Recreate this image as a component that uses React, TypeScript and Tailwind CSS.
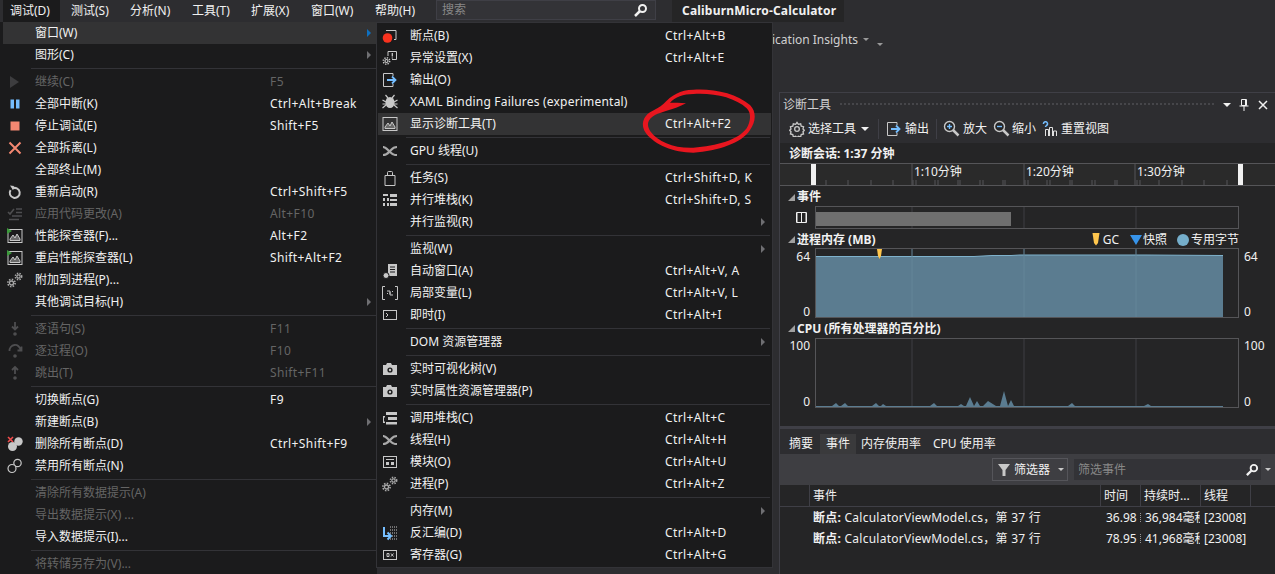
import type {ReactNode} from 'react';

const gray = '#c8c8c8';
const dim = '#4e4e50';

function Gears({c = '#a9a9a9'}: {c?: string}) {
	return (
		<svg width="16" height="16" viewBox="0 0 16 16" fill="none" stroke={c}>
			<circle cx="4.5" cy="11" r="2" strokeWidth="1.3" />
			<circle cx="4.5" cy="11" r="3.6" strokeWidth="1.6" strokeDasharray="1.5 1.3" />
			<circle cx="11.5" cy="4.5" r="1.7" strokeWidth="1.2" />
			<circle cx="11.5" cy="4.5" r="3.2" strokeWidth="1.5" strokeDasharray="1.4 1.2" />
		</svg>
	);
}

function Chart({play}: {play?: boolean}) {
	return (
		<svg width="16" height="16" viewBox="0 0 16 16" fill="none">
			<rect x="1" y="1.5" width="14" height="13" stroke={gray} />
			<path d="M3 12.500V11l3-4 2 3 2-4 3 5v1.500z" stroke={gray} fill="#6a6a6a" />
			{play ? <path d="M0 0l5 3-5 3z" fill="#3c9a3c" /> : null}
		</svg>
	);
}

function Threads() {
	return (
		<svg width="16" height="16" viewBox="0 0 16 16" fill="none" stroke="#a9a9a9" strokeWidth="2.200">
			<path d="M1 4c2 0 3 1 5 3l2 2c2 2 3 3 5 3M15 4c-2 0-4 .500-6 3L7 9c-2 2.500-3 3-6 3" />
			<path d="M13 12h2M1 4h1" />
		</svg>
	);
}

function Camera() {
	return (
		<svg width="16" height="16" viewBox="0 0 16 16">
			<path d="M1 4h3l1-2h4l1 2h5v10H1z" fill={gray} />
			<circle cx="8" cy="9" r="2.6" fill="#1b1b1c" />
			<circle cx="8" cy="9" r="1.2" fill={gray} />
		</svg>
	);
}

function StepIcon({d, c = dim}: {d: string; c?: string}) {
	return (
		<svg width="16" height="16" viewBox="0 0 16 16" fill="none" stroke={c} strokeWidth="1.8">
			<path d={d} />
			<circle cx="8" cy="13" r="1.8" fill={c} stroke="none" />
		</svg>
	);
}

const icons: Record<string, ReactNode> = {
	play: (
		<svg width="16" height="16" viewBox="0 0 16 16">
			<path d="M3 2l9 6-9 6z" fill="#3d3d3f" />
		</svg>
	),
	pause: (
		<svg width="16" height="16" viewBox="0 0 16 16">
			<path d="M3.500 3.500h3.500v9H3.500zM9 3.500h3.500v9H9z" fill="#75beff" />
		</svg>
	),
	stop: (
		<svg width="16" height="16" viewBox="0 0 16 16">
			<rect x="3.500" y="3.500" width="9" height="9" fill="#f48771" />
		</svg>
	),
	x: (
		<svg width="16" height="16" viewBox="0 0 16 16" stroke="#f48771" strokeWidth="2">
			<path d="M2.500 2.500l11 11M13.500 2.500l-11 11" />
		</svg>
	),
	restart: (
		<svg width="16" height="16" viewBox="0 0 16 16" fill="none" stroke={gray} strokeWidth="2">
			<path d="M5.200 4.600a5 5 0 1 1-1.600 1.500" />
			<path d="M3 1.500l4 .5-1 4z" fill={gray} stroke="none" />
		</svg>
	),
	apply: (
		<svg width="16" height="16" viewBox="0 0 16 16" fill="none" stroke={dim} strokeWidth="1.600">
			<path d="M1 6l2 2 4-5M9 3h6M9 6.500h6M5 10h10M2 13.500h10" />
		</svg>
	),
	perf: <Chart play />,
	gears: <Gears />,
	stepin: <StepIcon d="M8 1v7M5 5.500l3 3 3-3" />,
	stepover: <StepIcon d="M2.500 8a5.500 5.500 0 0 1 11-1M14.500 3.500v4h-4" />,
	stepout: <StepIcon d="M8 9V2.500M5 5l3-3 3 3" />,
	delbp: (
		<svg width="16" height="16" viewBox="0 0 16 16">
			<circle cx="11.500" cy="5.500" r="4.200" fill={gray} />
			<circle cx="5.500" cy="10.500" r="4.500" fill={gray} />
			<path d="M1 1l5 5M6 1L1 6" stroke="#f14c4c" strokeWidth="1.600" />
		</svg>
	),
	disbp: (
		<svg width="16" height="16" viewBox="0 0 16 16" fill="none" stroke={gray} strokeWidth="1.200">
			<circle cx="10.500" cy="5" r="3.700" />
			<circle cx="5" cy="10.500" r="4" fill="#1b1b1c" />
		</svg>
	),
	bp: (
		<svg width="16" height="16" viewBox="0 0 16 16" fill="none">
			<path d="M4 2.500h10v9h-2" stroke={gray} />
			<circle cx="5.500" cy="10" r="4.800" fill="#f8321e" />
		</svg>
	),
	exc: (
		<svg width="16" height="16" viewBox="0 0 16 16" fill="none">
			<path d="M6 6V1.500h8.500v8H10" stroke={gray} />
			<path d="M10.300 3v3.500M10.300 7.500v1" stroke={gray} strokeWidth="1.300" />
			<circle cx="4.500" cy="11" r="1.500" stroke={gray} strokeWidth="1.200" />
			<circle cx="4.500" cy="11" r="3.200" stroke={gray} strokeWidth="1.500" strokeDasharray="1.300 1.200" />
		</svg>
	),
	output: (
		<svg width="16" height="16" viewBox="0 0 16 16" fill="none">
			<path d="M11 4V1.500H1.500v13H11V12" stroke={gray} />
			<path d="M5 8h8M10 4.500L13.500 8 10 11.500" stroke="#75beff" strokeWidth="1.800" />
		</svg>
	),
	bug: (
		<svg width="16" height="16" viewBox="0 0 16 16" fill="none" stroke={gray} strokeWidth="1.200">
			<ellipse cx="8" cy="8.500" rx="4.500" ry="5.500" fill={gray} stroke="none" />
			<path d="M3.500 1l2.500 3M12.500 1L10 4M.500 6l3.500 2M15.500 6L12 8M.500 14l3.500-3M15.500 14L12 11M.500 10H4M15.500 10H12" />
		</svg>
	),
	diag: <Chart />,
	threads: <Threads />,
	task: (
		<svg width="16" height="16" viewBox="0 0 16 16" fill="none" stroke={gray}>
			<path d="M3 5.500h10v10H3zM5.500 5.500V2.500a1 1 0 0 1 1-1h3a1 1 0 0 1 1 1v3" />
		</svg>
	),
	stacks: (
		<svg width="16" height="16" viewBox="0 0 16 16" fill={gray}>
			<path d="M1 2h5v2H1zM8 2h7v3H8zM1 6h2v3H1zM5 6h2v3H5zM8 7h7v2H8zM1 11h2v3H1zM5 11h2v3H5zM8 11h7v3H8z" />
		</svg>
	),
	autos: (
		<svg width="16" height="16" viewBox="0 0 16 16">
			<path d="M6 1h9v12H6z" fill={gray} />
			<path d="M8 4h5M8 6.500h5M8 9h5" stroke="#1b1b1c" />
			<circle cx="4" cy="12.500" r="3" fill={gray} stroke="#1b1b1c" />
		</svg>
	),
	locals: (
		<svg width="16" height="16" viewBox="0 0 16 16" fill="none" stroke={gray}>
			<path d="M3 1.500H.5v13H3M13 1.500h2.500v13H13" />
			<path d="M5 6h3v3M11 10H8V7M5 9l1-1M11 6l-1 1" />
		</svg>
	),
	immediate: (
		<svg width="16" height="16" viewBox="0 0 16 16" fill="none" stroke={gray}>
			<rect x="1.500" y="3.500" width="13" height="9" />
			<path d="M4 6l2 2-2 2" />
		</svg>
	),
	camera: <Camera />,
	callstack: (
		<svg width="16" height="16" viewBox="0 0 16 16" fill={gray}>
			<path d="M4 2h11v3H4zM6 7h9v3H6zM4 12h11v2.500H4zM1 6h2v1.500H2v4h1V13H1z" />
		</svg>
	),
	modules: (
		<svg width="16" height="16" viewBox="0 0 16 16" fill="none" stroke={gray}>
			<rect x="1.500" y="2.500" width="13" height="11" />
			<path d="M4 5.500h8" strokeWidth="1" />
			<path d="M4 8h3v3H4zM9 8h3v3H9z" fill={gray} stroke="none" />
		</svg>
	),
	disasm: (
		<svg width="16" height="16" viewBox="0 0 16 16" fill="none">
			<path d="M8 2h7M8 5h7M8 8h7M8 11h7M8 14h7" stroke={gray} strokeDasharray="1 1" />
			<path d="M2 2v9h6M5.500 7.500L9 11l-3.500 3.500" stroke="#75beff" strokeWidth="2" />
		</svg>
	),
	registers: (
		<svg width="16" height="16" viewBox="0 0 16 16" fill="none" stroke={gray}>
			<rect x="1.500" y="3.500" width="13" height="9" />
			<path d="M5 6.500h2v3H5zM9 6.500l2.500 3M11.500 6.500L9 9.500" />
		</svg>
	),
};

type Item = {l: string; k?: string; i?: string; off?: boolean; sub?: boolean; hot?: boolean} | 'sep';

const leftMenu: Item[] = [
	{l: '窗口(W)', sub: true, hot: true},
	{l: '图形(C)', sub: true},
	'sep',
	{l: '继续(C)', k: 'F5', i: 'play', off: true},
	{l: '全部中断(K)', k: 'Ctrl+Alt+Break', i: 'pause'},
	{l: '停止调试(E)', k: 'Shift+F5', i: 'stop'},
	{l: '全部拆离(L)', i: 'x'},
	{l: '全部终止(M)'},
	{l: '重新启动(R)', k: 'Ctrl+Shift+F5', i: 'restart'},
	{l: '应用代码更改(A)', k: 'Alt+F10', i: 'apply', off: true},
	{l: '性能探查器(F)...', k: 'Alt+F2', i: 'perf'},
	{l: '重启性能探查器(L)', k: 'Shift+Alt+F2', i: 'perf'},
	{l: '附加到进程(P)...', i: 'gears'},
	{l: '其他调试目标(H)', sub: true},
	'sep',
	{l: '逐语句(S)', k: 'F11', i: 'stepin', off: true},
	{l: '逐过程(O)', k: 'F10', i: 'stepover', off: true},
	{l: '跳出(T)', k: 'Shift+F11', i: 'stepout', off: true},
	'sep',
	{l: '切换断点(G)', k: 'F9'},
	{l: '新建断点(B)', sub: true},
	{l: '删除所有断点(D)', k: 'Ctrl+Shift+F9', i: 'delbp'},
	{l: '禁用所有断点(N)', i: 'disbp'},
	'sep',
	{l: '清除所有数据提示(A)', off: true},
	{l: '导出数据提示(X) ...', off: true},
	{l: '导入数据提示(I)...'},
	'sep',
	{l: '将转储另存为(V)...', off: true},
];

const windowMenu: Item[] = [
	{l: '断点(B)', k: 'Ctrl+Alt+B', i: 'bp'},
	{l: '异常设置(X)', k: 'Ctrl+Alt+E', i: 'exc'},
	{l: '输出(O)', i: 'output'},
	{l: 'XAML Binding Failures (experimental)', i: 'bug'},
	{l: '显示诊断工具(T)', k: 'Ctrl+Alt+F2', i: 'diag', hot: true},
	'sep',
	{l: 'GPU 线程(U)', i: 'threads'},
	'sep',
	{l: '任务(S)', k: 'Ctrl+Shift+D, K', i: 'task'},
	{l: '并行堆栈(K)', k: 'Ctrl+Shift+D, S', i: 'stacks'},
	{l: '并行监视(R)', sub: true},
	'sep',
	{l: '监视(W)', sub: true},
	{l: '自动窗口(A)', k: 'Ctrl+Alt+V, A', i: 'autos'},
	{l: '局部变量(L)', k: 'Ctrl+Alt+V, L', i: 'locals'},
	{l: '即时(I)', k: 'Ctrl+Alt+I', i: 'immediate'},
	'sep',
	{l: 'DOM 资源管理器', sub: true},
	'sep',
	{l: '实时可视化树(V)', i: 'camera'},
	{l: '实时属性资源管理器(P)', i: 'camera'},
	'sep',
	{l: '调用堆栈(C)', k: 'Ctrl+Alt+C', i: 'callstack'},
	{l: '线程(H)', k: 'Ctrl+Alt+H', i: 'threads'},
	{l: '模块(O)', k: 'Ctrl+Alt+U', i: 'modules'},
	{l: '进程(P)', k: 'Ctrl+Alt+Z', i: 'gears'},
	'sep',
	{l: '内存(M)', sub: true},
	{l: '反汇编(D)', k: 'Ctrl+Alt+D', i: 'disasm'},
	{l: '寄存器(G)', k: 'Ctrl+Alt+G', i: 'registers'},
];

function MenuRows({items, labelWidth}: {items: Item[]; labelWidth: string}) {
	return (
		<>
			{items.map((it, n) =>
				it === 'sep' ? (
					<div key={n} className="flex h-[5px] items-center pl-[28px] pr-[1px]">
						<div className="h-px w-full bg-[#333337]" />
					</div>
				) : (
					<div
						key={n}
						className={`flex h-[22px] items-center ${it.hot ? 'bg-[#333334]' : ''} ${it.off ? 'text-[#656565]' : 'text-[#f1f1f1]'}`}
					>
						<span className="flex w-[24px] shrink-0 justify-center">{it.i ? icons[it.i] : null}</span>
						<span className={`ml-[8px] shrink-0 whitespace-nowrap ${labelWidth} ${it.l.startsWith('XAML') ? 'tracking-[0.2px]' : ''}`}>
							{it.l}
						</span>
						<span className="flex-1 whitespace-nowrap tracking-[0.4px]">{it.k}</span>
						{it.sub ? (
							<span
								className={`mr-[6px] h-0 w-0 border-y-[4px] border-l-[4px] border-y-transparent ${it.hot ? 'border-l-[#0e70c0]' : 'border-l-[#6f6f72]'}`}
							/>
						) : null}
					</div>
				),
			)}
		</>
	);
}

function Section({children, right, className}: {children: ReactNode; right?: ReactNode; className: string}) {
	return (
		<div className={`flex items-center pl-[8px] ${className}`}>
			<span className="mr-[2px] h-0 w-0 border-b-[7px] border-l-[7px] border-b-[#a0a0a0] border-l-transparent" />
			<span className="font-bold text-[#f1f1f1]">{children}</span>
			{right}
		</div>
	);
}

function PlotRow({top, bottom, pad, children}: {top: string; bottom: string; pad: string; children: ReactNode}) {
	return (
		<div className="flex h-[70px]">
			<div className={`flex w-[35px] flex-col items-end justify-between pr-[5px] leading-[12px] text-[#f1f1f1] ${pad}`}>
				<span>{top}</span>
				<span>{bottom}</span>
			</div>
			<div className="w-[424px] border border-[#555558]">{children}</div>
			<div className={`flex flex-col justify-between pl-[5px] leading-[12px] text-[#f1f1f1] ${pad}`}>
				<span>{top}</span>
				<span>{bottom}</span>
			</div>
		</div>
	);
}

function Grid({c = '#3e3e42'}: {c?: string}) {
	return <path d="M96 0v70M208 0v70M320 0v70" stroke={c} />;
}

function Magnifier({plus}: {plus?: boolean}) {
	return (
		<svg width="17" height="17" viewBox="0 0 17 17" fill="none">
			<path d="M10 10l5.500 5.500" stroke={gray} strokeWidth="2.500" />
			<circle cx="6.500" cy="6.500" r="5" stroke={gray} strokeWidth="1.400" fill="#252526" />
			<path d={plus ? 'M4 6.500h5M6.500 4v5' : 'M4 6.500h5'} stroke="#75beff" strokeWidth="1.400" />
		</svg>
	);
}

const ticks = [0, 22, 45, 67, 90, 112, 134, 157, 179, 202, 224, 246, 269, 291, 314];

export default function App() {
	return (
		<div className="relative h-[574px] w-[1275px] overflow-hidden bg-[#2d2d30] text-[12px] [font-family:'Noto_Sans','Noto_Sans_CJK_SC',sans-serif]">
			<div className="flex h-[22px] items-center text-[#f1f1f1]">
				<div className="ml-[3px] flex h-[22px] w-[57px] items-center bg-[#1b1b1c] pl-[7px]">调试(D)</div>
				<span className="ml-[11px] w-[59px]">测试(S)</span>
				<span className="w-[62px]">分析(N)</span>
				<span className="w-[59px]">工具(T)</span>
				<span className="w-[60px]">扩展(X)</span>
				<span className="w-[64px]">窗口(W)</span>
				<span className="w-[61px]">帮助(H)</span>
				<div className="flex h-[20px] w-[220px] items-center justify-between self-start border border-[#3f3f46] bg-[#333337] pl-[5px] pr-[7px] text-[#888888]">
					搜索
					<svg width="15" height="15" viewBox="0 0 15 15" fill="none" stroke="#f1f1f1">
						<circle cx="9.500" cy="5.500" r="3.500" strokeWidth="2" />
						<path d="M7 8l-5 5" strokeWidth="2.500" />
					</svg>
				</div>
				<div className="ml-[16px] flex h-[22px] w-[172px] items-center bg-[#252526] pl-[10px] font-bold tracking-[0.2px]">
					CaliburnMicro-Calculator
				</div>
			</div>

			<div className="flex h-[70px] items-start justify-end pr-[392px] pt-[9px] text-[#d0d0d0]">
				<span>Application Insights</span>
				<span className="ml-[5px] mt-[7px] h-0 w-0 border-x-[3px] border-t-[3px] border-x-transparent border-t-[#999999]" />
				<span className="ml-[8px] mt-[12px] h-0 w-0 border-x-[3px] border-t-[3px] border-x-transparent border-t-[#999999]" />
			</div>

			{/* diagnostic tools panel */}
			<div className="ml-auto h-[482px] w-[496px] border-l border-t border-[#3f3f46] bg-[#252526]">
				<div className="flex h-[23px] items-center bg-[#2d2d30] pl-[3px] pr-[6px] text-[#d0d0d0]">
					<span>诊断工具</span>
					<div className="mx-[8px] h-[5px] flex-1 bg-[radial-gradient(#46464a_1px,transparent_1px)] bg-[length:4px_4px]" />
					<span className="mr-[7px] h-0 w-0 border-x-[4px] border-t-[4px] border-x-transparent border-t-[#f1f1f1]" />
					<svg className="mr-[7px]" width="12" height="14" viewBox="0 0 12 14" fill="none" stroke="#f1f1f1">
						<path d="M3.500 1.500h5v6h-5zM1.500 8h9M6 8v5M7.500 2v5" />
					</svg>
					<svg width="12" height="12" viewBox="0 0 12 12" stroke="#f1f1f1" strokeWidth="1.500">
						<path d="M2 2l8 8M10 2l-8 8" />
					</svg>
				</div>
				<div className="flex h-[27px] items-center bg-[#2d2d30] pb-[2px] pl-[9px] text-[#f1f1f1]">
					<svg width="16" height="16" viewBox="0 0 24 24" fill="none" stroke={gray} strokeWidth="2">
						<circle cx="12" cy="12" r="3.500" />
						<path d="M12 2l2 3 3.500-.8.800 3.500 3.500.8-.8 3.500 2 2-2 2 .8 3.500-3.500.8-.8 3.500-3.500-.8-2 2-2-2-3.500.8-.8-3.500-3.500-.8.800-3.500-2-2 2-2-.8-3.500 3.500-.8.800-3.500 3.500.8z" />
					</svg>
					<span className="ml-[3px]">选择工具</span>
					<span className="ml-[5px] h-0 w-0 border-x-[4px] border-t-[4px] border-x-transparent border-t-[#f1f1f1]" />
					<div className="ml-[9px] h-[20px] w-px bg-[#3f3f46]" />
					<span className="ml-[7px] flex">{icons.output}</span>
					<span className="ml-[3px]">输出</span>
					<div className="ml-[7px] h-[20px] w-px bg-[#3f3f46]" />
					<span className="ml-[6px] flex">
						<Magnifier plus />
					</span>
					<span className="ml-[3px]">放大</span>
					<span className="ml-[6px] flex">
						<Magnifier />
					</span>
					<span className="ml-[2px]">缩小</span>
					<svg className="ml-[6px]" width="16" height="16" viewBox="0 0 16 16" fill="none" stroke="#e0e0e0">
						<path d="M3.500 15V8.500h3V15M7.500 15V6.500h3V15M11.500 15v-5h3v5" />
						<path d="M1.500 3a2 2 0 1 1 3 1.500c-.7.500-1 1-1 1.500" stroke="#75beff" strokeWidth="1.500" />
					</svg>
					<span className="ml-[3px]">重置视图</span>
				</div>
				<div className="flex h-[20px] items-center pl-[9px] pt-[2px] font-bold text-[#f1f1f1]">诊断会话: 1:37 分钟</div>
				<svg className="block h-[23px] w-[495px] border-y border-[#555558] bg-[#2a2a2a]" viewBox="0 0 495 21">
					<g fill="#f1f1f1" fontSize="12">
						<text x="134" y="12">1:10分钟</text>
						<text x="246" y="12">1:20分钟</text>
						<text x="357" y="12">1:30分钟</text>
					</g>
					<path d="M132 0v21M244 0v21M355 0v21" stroke="#555558" />
					{ticks.map(t => (
						<path key={t} d={`M${t + 46} 16v5M${t + 133} 16v5`} stroke="#555558" />
					))}
					<rect x="31" y="0" width="5" height="21" fill="#f1f1f1" />
					<rect x="458" y="0" width="5" height="21" fill="#f1f1f1" />
				</svg>

				<Section className="h-[20px] pt-[2px]">事件</Section>
				<div className="flex h-[23px]">
					<div className="flex w-[35px] items-center justify-end pr-[8px]">
						<svg width="11" height="11" viewBox="0 0 11 11" fill="none" stroke="#f1f1f1">
							<path d="M.500 .500h10v10H.500zM5.500 .500v10" />
							<path d="M1.500 1v9M9.500 1v9" stroke="#8a8a8a" />
						</svg>
					</div>
					<div className="w-[424px] border border-[#555558]">
						<svg className="block h-full w-full" viewBox="0 0 422 21">
							<Grid />
							<rect x="0" y="5" width="195" height="14" fill="#6f6f6f" />
						</svg>
					</div>
				</div>

				<Section
					className="h-[19px] pt-[2px]"
					right={
						<div className="mr-[36px] ml-auto flex items-center text-[#f1f1f1]">
							<svg width="8" height="13" viewBox="0 0 8 13">
								<path d="M0.500 0h7L6 10l-2 2.500L2 10z" fill="#ffc64d" />
							</svg>
							<span className="ml-[3px]">GC</span>
							<span className="ml-[11px] h-0 w-0 border-x-[6px] border-t-[10px] border-x-transparent border-t-[#3794ea]" />
							<span className="ml-[1px]">快照</span>
							<span className="ml-[10px] h-[12px] w-[12px] rounded-full bg-[#75aecb]" />
							<span className="ml-[2px]">专用字节</span>
						</div>
					}
				>
					进程内存 (MB)
				</Section>
				<PlotRow top="64" bottom="0" pad="pt-[3px]">
					<svg className="block h-full w-full" viewBox="0 0 422 68">
						<path d="M0 7.500H158L176 6.500H195L204 6H330L407 6.500V68H0z" fill="#5b7c90" />
						<path d="M0 7.500H158L176 6.500H195L204 6H330L407 6.500" fill="none" stroke="#7fb2cc" />
						<Grid c="#648598" />
						<path d="M61 0h5l-1 7-1.500 3L62 7z" fill="#ffc64d" />
					</svg>
				</PlotRow>

				<Section className="h-[20px] pt-[1px]">CPU (所有处理器的百分比)</Section>
				<PlotRow top="100" bottom="0" pad="pt-[2px]">
					<svg className="block h-full w-full" viewBox="0 0 422 68">
						<Grid />
						<path
							d="M0 67H16L20 64L23 67H25L29 64L32 67H56L60 64L63 67H65L67 65L70 67H114L118 64L121 67H142L145 65L148 67H150L154 58L158 67L161 62L164 67H167L172 62L180 67H184L188 52L192 67L195 61L198 67H252L256 64L259 67H328L332 65L335 67H407V68H0z"
							fill="#5b7c90"
						/>
						<path d="M0 67.500H407" stroke="#5b7c90" />
					</svg>
				</PlotRow>

				<div className="mt-[18px] h-[3px] bg-[#3f3f46]" />
				<div className="flex h-[25px] items-end bg-[#2d2d30] pl-[2px] text-[#f1f1f1]">
					<span className="flex h-[20px] w-[38px] items-center justify-center">摘要</span>
					<span className="flex h-[20px] w-[36px] items-center justify-center bg-[#3a3a3c]">事件</span>
					<span className="ml-[5px] flex h-[20px] items-center">内存使用率</span>
					<span className="ml-[12px] flex h-[20px] items-center">CPU 使用率</span>
				</div>
				<div className="flex h-[31px] items-center bg-[#3e3e42] pl-[212px]">
					<div className="flex h-[23px] w-[76px] items-center border border-[#55555a] pl-[4px] text-[#f1f1f1]">
						<svg width="14" height="14" viewBox="0 0 14 14">
							<path d="M1 1h12L8.500 7v6h-3V7z" fill={gray} />
						</svg>
						<span className="ml-[3px]">筛选器</span>
						<span className="ml-[8px] h-0 w-0 border-x-[3px] border-t-[3px] border-x-transparent border-t-[#c8c8c8]" />
					</div>
					<div className="ml-[6px] flex h-[21px] w-[187px] items-center justify-between bg-[#333337] pl-[4px] pr-[2px] text-[#888888]">
						筛选事件
						<svg width="14" height="14" viewBox="0 0 15 15" fill="none" stroke="#f1f1f1">
							<circle cx="9.500" cy="5.500" r="3.500" strokeWidth="2" />
							<path d="M7 8l-5 5" strokeWidth="2.500" />
						</svg>
					</div>
					<span className="ml-[4px] h-0 w-0 border-x-[3px] border-t-[3px] border-x-transparent border-t-[#c8c8c8]" />
				</div>
				<div className="grid h-[22px] grid-cols-[29px_291px_40px_60px_50px_25px] border-b border-[#3f3f46] text-[#f1f1f1]">
					<span />
					<span className="flex items-center border-l border-[#3f3f46] pl-[3px]">事件</span>
					<span className="flex items-center border-l border-[#3f3f46] pl-[3px]">时间</span>
					<span className="flex items-center border-l border-[#3f3f46] pl-[3px]">持续时...</span>
					<span className="flex items-center border-l border-[#3f3f46] pl-[3px]">线程</span>
					<span className="border-l border-[#3f3f46]" />
				</div>
				{[
					['36.98', '36,984毫秒'],
					['78.95', '41,968毫秒'],
				].map(r => (
					<div
						key={r[0]}
						className="grid h-[21px] grid-cols-[29px_291px_40px_60px_50px] items-center whitespace-nowrap text-[#f1f1f1] first-of-type:mt-[1px]"
					>
						<span />
						<span className="pl-[4px] tracking-[0.25px]">
							<b>断点:</b> CalculatorViewModel.cs，第 37 行
						</span>
						<span className="pl-[6px]">{r[0]}</span>
						<span className="flex items-center overflow-hidden">
							<span className="mr-[4px] h-[9px] shrink-0 border-l border-dotted border-[#999999]" />
							{r[1]}
						</span>
						<span className="pl-[4px]">[23008]</span>
					</div>
				))}
			</div>

			{/* debug menu, open over the page */}
			<div className="absolute left-0 top-[22px] h-[552px] w-[377px] bg-[#1b1b1c] pl-[3px]">
				<MenuRows items={leftMenu} labelWidth="w-[235px]" />
			</div>

			{/* window submenu */}
			<div className="absolute left-[376px] top-[22px] h-[546px] w-[397px] border border-[#333337] bg-[#1b1b1c] px-[1px] pt-[2px]">
				<MenuRows items={windowMenu} labelWidth="w-[255px]" />
			</div>

			{/* hand drawn red ring around the shortcut */}
			<svg className="pointer-events-none absolute left-[630px] top-[80px]" width="140" height="80" viewBox="0 0 420 240">
				<path
					fillRule="evenodd"
					fill="#e8161f"
					d="M100 72C125 45 150 30 190 29C250 25 320 40 360 75C380 95 378 125 360 150C335 190 265 212 190 218C130 218 75 195 48 160C30 135 40 110 60 97C75 88 90 82 100 72zM120 68C135 52 160 42 190 42C250 38 315 52 350 85C365 100 362 125 350 145C325 180 260 198 190 203C130 205 85 185 62 155C48 135 52 118 75 105C95 95 130 90 168 70C150 68 135 68 120 68z"
				/>
			</svg>
		</div>
	);
}
